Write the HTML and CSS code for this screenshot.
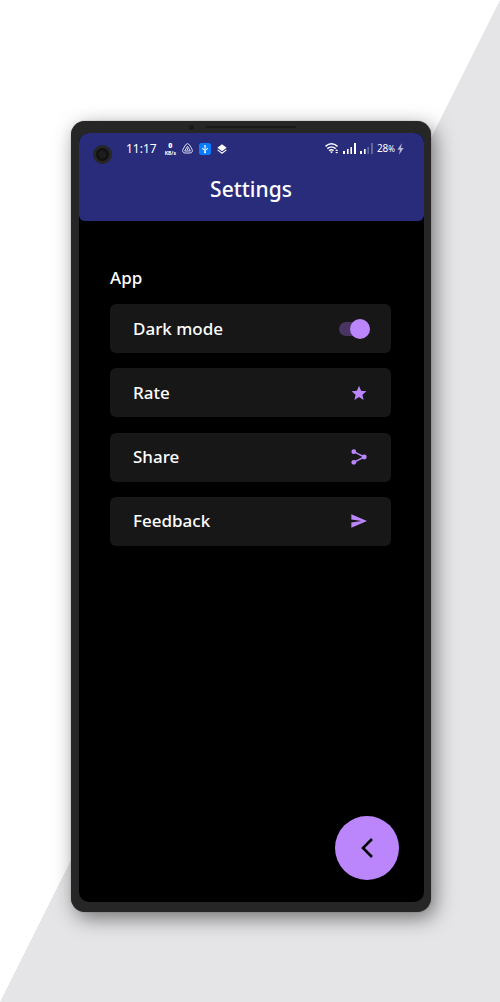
FILE: index.html
```html
<!DOCTYPE html>
<html lang="en">
<head>
<meta charset="utf-8">
<meta name="viewport" content="width=device-width, initial-scale=1">
<title>Settings</title>
<link rel="stylesheet" href="styles.css">
</head>
<body>
<div class="phone">
  <div class="bezel-top"><span class="sensor"></span><span class="speaker"></span></div>
  <div class="screen">
    <span class="camera"></span>
    <header class="header">
      <div class="status">
        <div class="status-left">
          <span class="clock">11:17</span>
          <span class="rate"><b>0</b><span>KB/s</span></span>
          <svg width="11" height="11" viewBox="0 0 11 11" fill="none" stroke="#dcdcf0" stroke-width="1"><path d="M3.6 1.8Q5.5-.6 7.4 1.8L10 6.2Q11.2 9.8 8 10H3Q-.2 9.8 1 6.2Z"/><path d="M5.5 3.2 8.3 8H2.7Z"/><path d="M5.5 5.4V7"/></svg>
          <svg width="12" height="12" viewBox="0 0 12 12"><rect width="12" height="12" rx="2.5" fill="#087cff"/><path d="M6 2.4V9.6M3.8 4.8V6.2L6 7.3 8.2 6.2V4.8" fill="none" stroke="#fff"/><path d="M4.8 3.4 6 1.7 7.2 3.4Z" fill="#fff"/><circle cx="6" cy="9.2" r="1" fill="#fff"/></svg>
          <svg width="10" height="10" viewBox="0 0 10 10"><path d="M5 .2 9.6 3.7 5 7.2.4 3.7Z" fill="#fff"/><path d="M.6 5.9 5 9.2 9.4 5.9" fill="none" stroke="#fff" stroke-width="1.1"/></svg>
        </div>
        <div class="status-right">
          <svg width="14" height="11" viewBox="0 0 14 11" fill="none" stroke="#fff" stroke-width="1.4"><path d="M.5 3.4Q6.5-1.7 12.5 3.4M2.3 5.6Q6.5 2.1 10.7 5.6M4.1 7.7Q6.5 5.8 8.6 7.5"/><path d="M5 8.6H8L6.5 10.6Z" fill="#fff" stroke="none"/><path d="M10.2 8 11.7 6.2 13.2 8ZM10.2 8.9H13.2L11.7 10.6Z" fill="#fff" stroke="none"/></svg>
          <svg width="13" height="11" viewBox="0 0 13 11" fill="#fff"><path d="M0 8H2V11H0ZM4 6H5.6V11H4ZM7.4 4H9V11H7.4ZM11 0H13V11H11Z"/></svg>
          <svg width="13" height="11" viewBox="0 0 13 11" fill="#fff"><path d="M0 8H2V11H0ZM4 6H5.6V11H4Z"/><path d="M7.4 4H9V11H7.4ZM11 0H13V11H11Z" opacity=".28"/></svg>
          <span class="battery">28<small>%</small></span>
          <svg width="7" height="12" viewBox="0 0 7 12"><path d="M4.7.3.4 6.7H3L2 11.7 6.6 5H4Z" fill="#b6b6d6"/></svg>
        </div>
      </div>
      <h1 class="title">Settings</h1>
    </header>
    <main class="content">
      <h2 class="section">App</h2>
      <div class="list">
        <label class="card"><span>Dark mode</span><input class="switch" type="checkbox" role="switch" checked></label>
        <button class="card" type="button"><span>Rate</span>
          <svg class="icon" viewBox="0 0 24 24"><path d="M12 18 18.9 22.4l-1.8-7.8L23.2 9.3l-8.1-.7L12 1.2 8.9 8.6.8 9.3l6.1 5.3-1.8 7.8z"/></svg></button>
        <button class="card" type="button"><span>Share</span>
          <svg class="icon" viewBox="0 0 24 24"><path d="M4 4 20 12 4 20" fill="none" stroke="#bb86fc" stroke-width="2.2"/><circle cx="4.2" cy="4" r="3.6"/><circle cx="19.8" cy="12" r="3.7"/><circle cx="4.2" cy="20" r="3.6"/></svg></button>
        <button class="card" type="button"><span>Feedback</span>
          <svg class="icon" viewBox="0 0 24 24"><path d="M.5 22 24 12 .5 2V9.8L16 12 .5 14.2z"/></svg></button>
      </div>
    </main>
    <footer class="footer">
      <button class="back" type="button" aria-label="Back"><svg width="14" height="22" viewBox="0 0 14 22" fill="none" stroke="#000" stroke-width="2.6"><path d="M12 2 3 11 12 20"/></svg></button>
    </footer>
  </div>
</div>
</body>
</html>
```
FILE: styles.css
```css
* {
  box-sizing: border-box;
}

body {
  display: flex;
  min-height: 100vh;
  margin: 0;
  padding: 121px 69px 90px 71px;
  background: linear-gradient(to bottom right, #fff 50%, #e5e5e7 50%);
  font-family: "Noto Sans", "Open Sans", sans-serif;
  color: #fff;
}

.phone {
  flex: 1;
  display: flex;
  flex-direction: column;
  padding: 0 7px 10px 8px;
  border-radius: 14px;
  background: #262626;
  box-shadow: 0 0 1px #555, 4px 6px 20px rgba(0, 0, 0, 0.5);
}

.bezel-top {
  display: flex;
  align-items: center;
  gap: 12px;
  height: 12px;
  padding-left: 110px;
}

.sensor {
  width: 5px;
  height: 5px;
  border-radius: 50%;
  background: #191919;
}

.speaker {
  width: 90px;
  height: 2px;
  border-radius: 1px;
  background: #191919;
}

.screen {
  position: relative;
  flex: 1;
  display: flex;
  flex-direction: column;
  border-radius: 10px;
  background: #000;
  overflow: hidden;
}

.camera {
  position: absolute;
  top: 12px;
  left: 14px;
  width: 19px;
  height: 19px;
  border: 3px solid #262626;
  border-radius: 50%;
  background: radial-gradient(circle, #1c1c1c 3px, #111 5px);
}

.header {
  padding: 8px 20px 17px 47px;
  border-radius: 0 0 6px 6px;
  background: #292c7b;
}

.status {
  display: flex;
  justify-content: space-between;
  height: 15px;
}

.status-left,
.status-right {
  display: flex;
  align-items: center;
}

.status-left {
  gap: 6px;
}

.status-right {
  gap: 4px;
}

.clock {
  margin-right: 2px;
  font-size: 12px;
  line-height: 14px;
}

.rate {
  display: flex;
  flex-direction: column;
  align-items: center;
  font-size: 5px;
  line-height: 7px;
  font-weight: 700;
}

.rate b {
  font-size: 7px;
  line-height: 9px;
}

.battery {
  margin-right: -2px;
  font-size: 10px;
  line-height: 14px;
}

.battery small {
  font-size: 8px;
}

.title {
  margin: 18px 28px 0 0;
  font-size: 21px;
  line-height: 30px;
  font-weight: 500;
  text-align: center;
}

.content {
  flex: 1;
  padding: 45px 33px 24px 31px;
}

.section {
  margin: 0 0 14px;
  font-size: 17px;
  line-height: 24px;
  font-weight: 500;
}

.list {
  display: grid;
  align-content: space-between;
  min-height: 242px;
}

.card {
  display: flex;
  align-items: center;
  justify-content: space-between;
  width: 100%;
  height: 49px;
  padding: 0 24px 0 23px;
  border: 0;
  border-radius: 6px;
  background: #171717;
  color: #fff;
  font: 500 17px/24px "Noto Sans", "Open Sans", sans-serif;
  text-align: left;
  cursor: pointer;
}

.icon {
  width: 16px;
  height: 16px;
  fill: #bb86fc;
}

.switch {
  appearance: none;
  display: flex;
  align-items: center;
  width: 31px;
  height: 14px;
  margin: 0 -3px 0 0;
  border-radius: 7px;
  background: #4a3461;
  cursor: pointer;
}

.switch::before {
  content: "";
  width: 20px;
  height: 20px;
  flex: none;
  border-radius: 50%;
  background: #aaa;
}

.switch:checked::before {
  margin-left: auto;
  background: #bb86fc;
}

.footer {
  display: flex;
  justify-content: flex-end;
  padding: 0 25px 22px;
}

.back {
  display: grid;
  place-items: center;
  width: 64px;
  height: 64px;
  padding: 0;
  border: 0;
  border-radius: 50%;
  background: #bb86fc;
  cursor: pointer;
}
```
